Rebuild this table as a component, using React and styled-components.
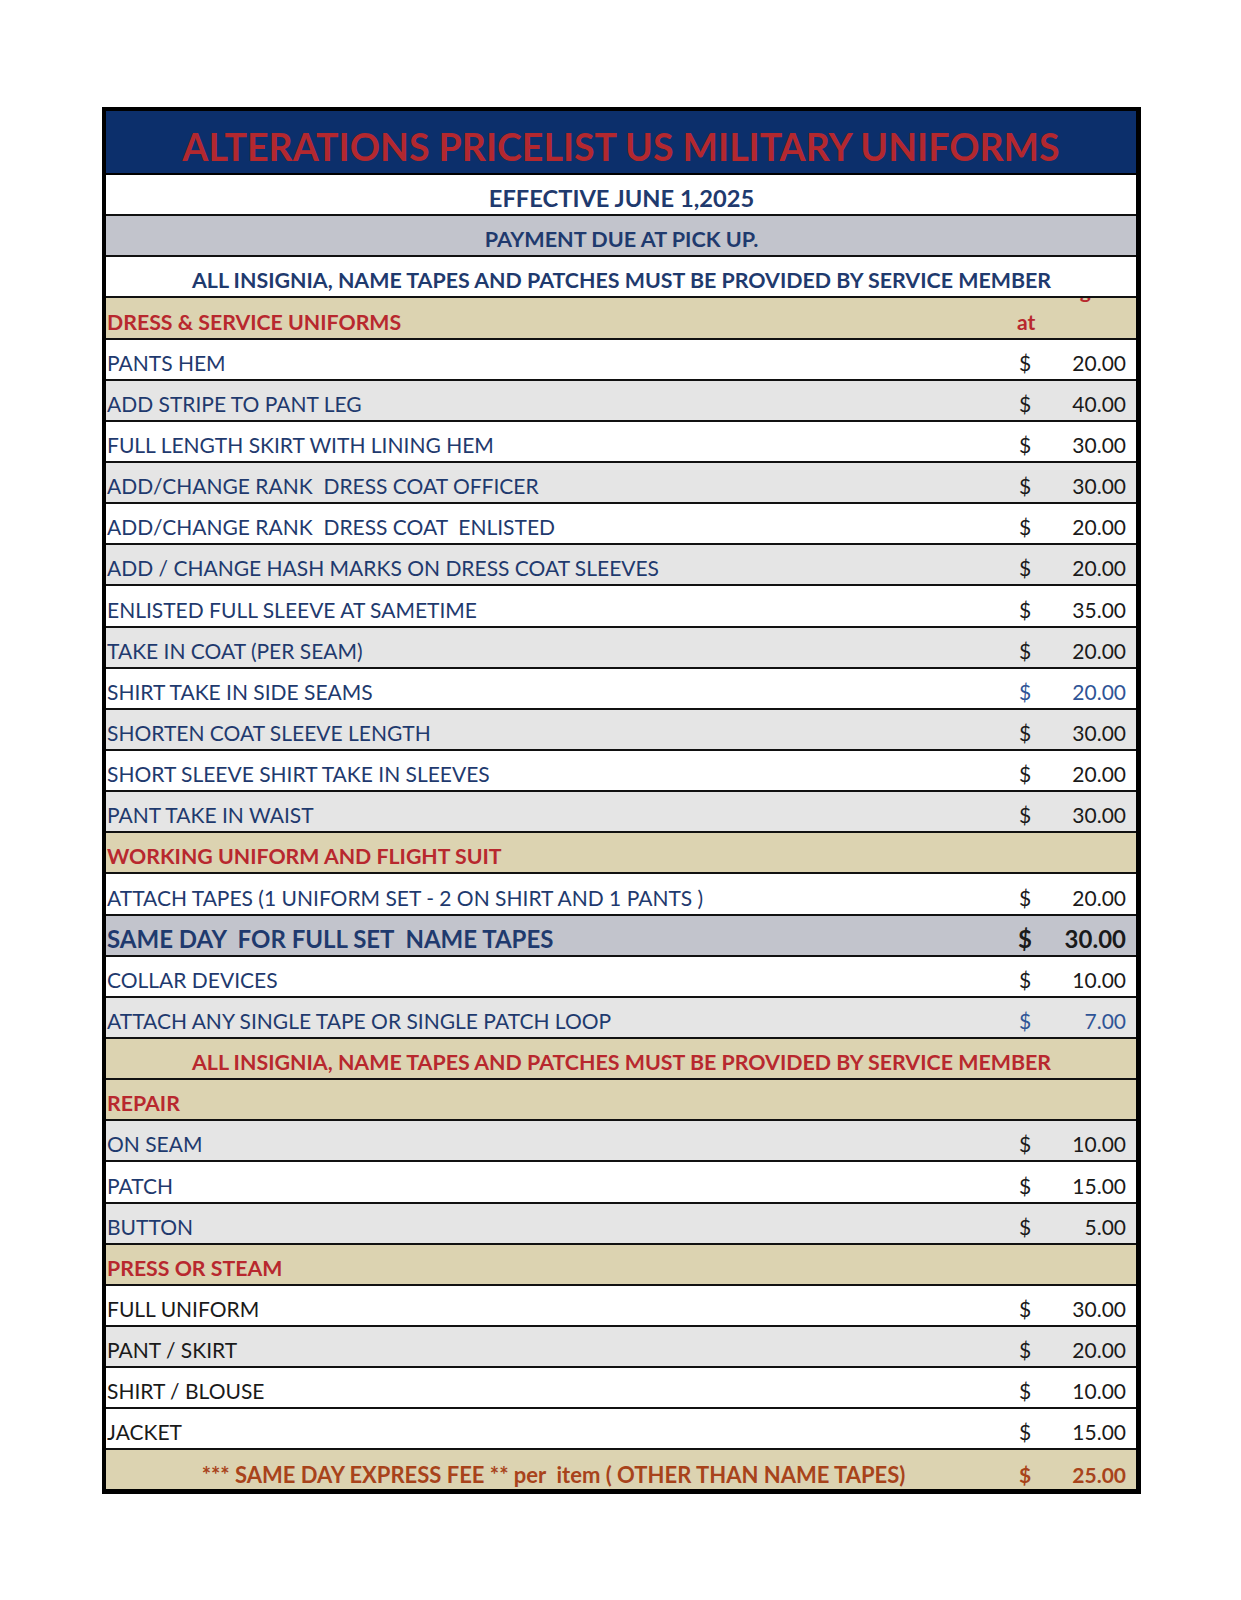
import React from 'react';
import styled, { createGlobalStyle } from 'styled-components';

const Global = createGlobalStyle`
  html, body { margin: 0; padding: 0; background: #fff; }
  body { font-family: Lato, "Open Sans", sans-serif; }
  * { box-sizing: border-box; }
`;

const BG = {
  white: '#ffffff',
  gray: '#e5e5e5',
  slate: '#c2c4cc',
  beige: '#dcd3b1',
};

const INK = {
  navy: '#1f3a6e',
  red: '#b8282e',
  black: '#1a1a1a',
  blue: '#2f5496',
  brown: '#a8431b',
};

const Page = styled.div`
  padding: 107px 0 0 102px;
  min-height: 1600px;
`;

const Sheet = styled.div`
  width: 1039px;
  border: 4px solid #000;
  border-right-width: 5px;
  border-bottom-width: 5px;
  display: flex;
  flex-direction: column;
`;

const Title = styled.div`
  height: 64px;
  padding-top: 9px;
  background: #0c2f6b;
  border-bottom: 2px solid #000;
  color: #b3282f;
  font-weight: 700;
  font-size: 37.5px;
  display: flex;
  align-items: center;
  justify-content: center;
  white-space: nowrap;
`;

const Row = styled.div`
  height: 41.15px;
  border-bottom: 2px solid #111;
  background: ${(p) => BG[p.$bg]};
  display: grid;
  grid-template-columns: 894px 50px 1fr;
  align-items: end;
  &:last-child { border-bottom: none; height: 39px; }
`;

const Label = styled.div`
  grid-column: ${(p) => (p.$full ? '1 / -1' : '1')};
  text-align: ${(p) => (p.$center ? 'center' : 'left')};
  padding: 0 0 ${(p) => p.$pb ?? 4}px 1px;
  line-height: 24px;
  font-size: ${(p) => p.$size || 21}px;
  font-weight: ${(p) => (p.$bold ? 700 : 400)};
  color: ${(p) => INK[p.$ink]};
  white-space: pre;
`;

const Dollar = styled.div`
  text-align: center;
  padding-bottom: ${(p) => p.$pb ?? 4}px;
  line-height: 24px;
  font-size: ${(p) => p.$size || 21}px;
  font-weight: ${(p) => (p.$bold ? 700 : 400)};
  color: ${(p) => INK[p.$ink]};
`;

const Amount = styled.div`
  text-align: right;
  padding: 0 10px ${(p) => p.$pb ?? 4}px 0;
  line-height: 24px;
  font-size: ${(p) => p.$size || 21}px;
  font-weight: ${(p) => (p.$bold ? 700 : 400)};
  color: ${(p) => INK[p.$ink]};
`;

const StartingNote = styled.div`
  grid-column: 2 / -1;
  align-self: stretch;
  overflow: hidden;
  display: flex;
  flex-direction: column;
  justify-content: flex-end;
  padding: 0 0 4px 17px;
  font-size: 21px;
  font-weight: 700;
  line-height: 24px;
  color: ${INK.red};
  white-space: nowrap;
`;

const NoteLine = styled.span`
  display: block;
  margin-bottom: ${(p) => (p.$gap ? 7.5 : 0)}px;
`;

const rows = [
  { kind: 'center', bg: 'white', text: 'EFFECTIVE JUNE 1,2025', size: 23.7 },
  { kind: 'center', bg: 'slate', text: 'PAYMENT DUE AT PICK UP.', size: 21.6 },
  { kind: 'center', bg: 'white', text: 'ALL INSIGNIA, NAME TAPES AND PATCHES MUST BE PROVIDED BY SERVICE MEMBER', size: 21.4 },
  { kind: 'section', text: 'DRESS & SERVICE UNIFORMS', starting: true },
  { kind: 'item', bg: 'white', text: 'PANTS HEM', price: '20.00' },
  { kind: 'item', bg: 'gray', text: 'ADD STRIPE TO PANT LEG', price: '40.00' },
  { kind: 'item', bg: 'white', text: 'FULL LENGTH SKIRT WITH LINING HEM', price: '30.00' },
  { kind: 'item', bg: 'gray', text: 'ADD/CHANGE RANK  DRESS COAT OFFICER', price: '30.00' },
  { kind: 'item', bg: 'white', text: 'ADD/CHANGE RANK  DRESS COAT  ENLISTED', price: '20.00' },
  { kind: 'item', bg: 'gray', text: 'ADD / CHANGE HASH MARKS ON DRESS COAT SLEEVES', price: '20.00' },
  { kind: 'item', bg: 'white', text: 'ENLISTED FULL SLEEVE AT SAMETIME', price: '35.00' },
  { kind: 'item', bg: 'gray', text: 'TAKE IN COAT (PER SEAM)', price: '20.00' },
  { kind: 'item', bg: 'white', text: 'SHIRT TAKE IN SIDE SEAMS', price: '20.00', priceInk: 'blue' },
  { kind: 'item', bg: 'gray', text: 'SHORTEN COAT SLEEVE LENGTH', price: '30.00' },
  { kind: 'item', bg: 'white', text: 'SHORT SLEEVE SHIRT TAKE IN SLEEVES', price: '20.00' },
  { kind: 'item', bg: 'gray', text: 'PANT TAKE IN WAIST', price: '30.00' },
  { kind: 'section', text: 'WORKING UNIFORM AND FLIGHT SUIT' },
  { kind: 'item', bg: 'white', text: 'ATTACH TAPES (1 UNIFORM SET - 2 ON SHIRT AND 1 PANTS )', price: '20.00' },
  { kind: 'item', bg: 'slate', text: 'SAME DAY  FOR FULL SET  NAME TAPES', price: '30.00', bold: true, size: 24 },
  { kind: 'item', bg: 'white', text: 'COLLAR DEVICES', price: '10.00' },
  { kind: 'item', bg: 'gray', text: 'ATTACH ANY SINGLE TAPE OR SINGLE PATCH LOOP', price: '7.00', priceInk: 'blue' },
  { kind: 'notice', text: 'ALL INSIGNIA, NAME TAPES AND PATCHES MUST BE PROVIDED BY SERVICE MEMBER' },
  { kind: 'section', text: 'REPAIR' },
  { kind: 'item', bg: 'gray', text: 'ON SEAM', price: '10.00' },
  { kind: 'item', bg: 'white', text: 'PATCH', price: '15.00' },
  { kind: 'item', bg: 'gray', text: 'BUTTON', price: '5.00' },
  { kind: 'section', text: 'PRESS OR STEAM' },
  { kind: 'item', bg: 'white', text: 'FULL UNIFORM', price: '30.00', ink: 'black' },
  { kind: 'item', bg: 'gray', text: 'PANT / SKIRT', price: '20.00', ink: 'black' },
  { kind: 'item', bg: 'white', text: 'SHIRT / BLOUSE', price: '10.00', ink: 'black' },
  { kind: 'item', bg: 'white', text: 'JACKET', price: '15.00', ink: 'black' },
  { kind: 'express', text: '*** SAME DAY EXPRESS FEE ** per  item ( OTHER THAN NAME TAPES)', price: '25.00' },
];

function renderRow(r, i) {
  if (r.kind === 'center') {
    return (
      <Row key={i} $bg={r.bg}>
        <Label $full $center $bold $ink="navy" $size={r.size}>{r.text}</Label>
      </Row>
    );
  }
  if (r.kind === 'section') {
    return (
      <Row key={i} $bg="beige">
        <Label $bold $ink="red" $size={21.3}>{r.text}</Label>
        {r.starting && (
          <StartingNote>
            <NoteLine $gap>Starting</NoteLine>
            <NoteLine>at</NoteLine>
          </StartingNote>
        )}
      </Row>
    );
  }
  if (r.kind === 'notice') {
    return (
      <Row key={i} $bg="beige">
        <Label $full $center $bold $ink="red" $size={21.4}>{r.text}</Label>
      </Row>
    );
  }
  if (r.kind === 'express') {
    return (
      <Row key={i} $bg="beige">
        <Label $center $bold $ink="brown" $size={22} $pb={2}>{r.text}</Label>
        <Dollar $bold $ink="brown" $pb={2}>$</Dollar>
        <Amount $bold $ink="brown" $pb={2}>{r.price}</Amount>
      </Row>
    );
  }
  const priceInk = r.bold ? 'black' : r.priceInk || 'black';
  return (
    <Row key={i} $bg={r.bg}>
      <Label $ink={r.ink || 'navy'} $bold={r.bold} $size={r.size}>{r.text}</Label>
      <Dollar $ink={priceInk} $bold={r.bold} $size={r.size}>$</Dollar>
      <Amount $ink={priceInk} $bold={r.bold} $size={r.size}>{r.price}</Amount>
    </Row>
  );
}

export default function App() {
  return (
    <>
      <Global />
      <Page>
        <Sheet>
          <Title>ALTERATIONS PRICELIST US MILITARY UNIFORMS</Title>
          {rows.map(renderRow)}
        </Sheet>
      </Page>
    </>
  );
}
